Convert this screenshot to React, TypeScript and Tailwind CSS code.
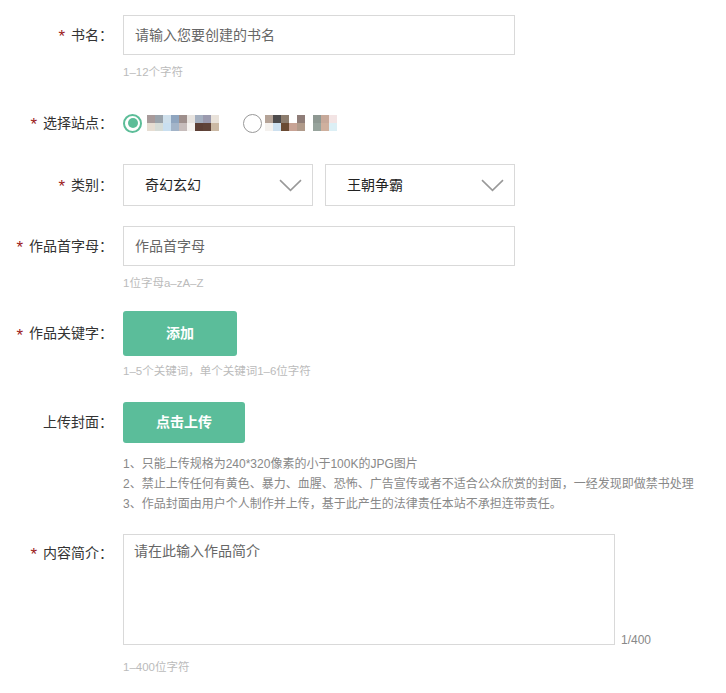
import type { ReactNode } from "react";

const FONT = "font-['Liberation_Sans','Noto_Sans_CJK_SC',sans-serif]";

const mosaicA = [
  ["#a89a9a", "#9aa3ab", "#cfe0ec", "#8fa5bf", "#9e8f8c", "#e8e4e0", "#a5b0c0", "#9b9aae", "#e9e2da"],
  ["#e6ddd2", "#d6dcd7", "#c9dff0", "#a3b4c8", "#c6bcbb", "#f5f2ef", "#5c3f35", "#5f4338", "#cbb9a4"],
];

const mosaicB = [
  ["#b5a397", "#4d4b4c", "#8d7d6e", "#ffffff", "#8f7d78", "#ffffff", "#8e9892", "#c7a99a", "#f3e4e4"],
  ["#f4f1ee", "#cde0ef", "#6b4b33", "#c8a395", "#b09a8a", "#ffffff", "#97a39c", "#cfb09e", "#dceff5"],
];

function Mosaic({ rows }: { rows: string[][] }) {
  return (
    <div className="flex flex-col">
      {rows.map((row, i) => (
        <div key={i} className="flex">
          {row.map((c, j) => (
            <span key={j} className="block h-[8px] w-[8px]" style={{ backgroundColor: c }} />
          ))}
        </div>
      ))}
    </div>
  );
}

function Label({ children, required = true, h }: { children: ReactNode; required?: boolean; h: string }) {
  return (
    <div className={`flex w-[113px] shrink-0 items-center justify-end text-[14px] text-[#333] ${h}`}>
      {required ? <span className="mr-[6px] mt-[3px] text-[17px] leading-none text-[#9b1b1b]">*</span> : null}
      <span>{children}：</span>
    </div>
  );
}

function Hint({ children, className = "" }: { children: ReactNode; className?: string }) {
  return <p className={`text-[11.5px] leading-[20px] text-[#bbb] ${className}`}>{children}</p>;
}

function Chevron() {
  return (
    <svg width="23" height="13" viewBox="0 0 23 13" fill="none" className="text-[#999]">
      <path d="M1 1.2L11.5 11.3L22 1.2" stroke="currentColor" strokeWidth="1.6" />
    </svg>
  );
}

function Select({ value }: { value: string }) {
  return (
    <div className="flex h-[42px] w-[190px] items-center justify-between border border-[#d9d9d9] pl-[21px] pr-[10px] text-[14px] text-[#222]">
      <span>{value}</span>
      <Chevron />
    </div>
  );
}

export default function App() {
  return (
    <div className={`${FONT} min-h-screen bg-white pt-[15px]`}>
      {/* 书名 */}
      <div className="flex gap-[10px]">
        <Label h="h-[40px]">书名</Label>
        <div>
          <div className="flex h-[40px] w-[392px] items-center border border-[#d9d9d9] px-[11px] text-[14px] text-[#666]">
            请输入您要创建的书名
          </div>
          <Hint className="mt-[7px]">1–12个字符</Hint>
        </div>
      </div>

      {/* 选择站点 */}
      <div className="mt-[31px] flex gap-[10px]">
        <Label h="h-[20px]">选择站点</Label>
        <div className="flex h-[20px] items-center">
          <span className="flex h-[19px] w-[19px] items-center justify-center rounded-full border-2 border-[#5cbd98]">
            <span className="h-[10px] w-[10px] rounded-full bg-[#5cbd98]" />
          </span>
          <div className="ml-[5px]">
            <Mosaic rows={mosaicA} />
          </div>
          <span className="ml-[24px] h-[19px] w-[19px] rounded-full border-[1.5px] border-[#999]" />
          <div className="ml-[3px]">
            <Mosaic rows={mosaicB} />
          </div>
        </div>
      </div>

      {/* 类别 */}
      <div className="mt-[31px] flex gap-[10px]">
        <Label h="h-[42px]">类别</Label>
        <div className="flex gap-[12px]">
          <Select value="奇幻玄幻" />
          <Select value="王朝争霸" />
        </div>
      </div>

      {/* 作品首字母 */}
      <div className="mt-[20px] flex gap-[10px]">
        <Label h="h-[40px]">作品首字母</Label>
        <div>
          <div className="flex h-[40px] w-[392px] items-center border border-[#d9d9d9] px-[11px] text-[14px] text-[#666]">
            作品首字母
          </div>
          <Hint className="mt-[7px]">1位字母a–zA–Z</Hint>
        </div>
      </div>

      {/* 作品关键字 */}
      <div className="mt-[18px] flex gap-[10px]">
        <Label h="h-[45px]">作品关键字</Label>
        <div>
          <button
            type="button"
            className="flex h-[45px] w-[114px] items-center justify-center rounded-[3px] bg-[#5bbd9a] text-[14px] font-bold text-white"
          >
            添加
          </button>
          <Hint className="mt-[5px]">1–5个关键词，单个关键词1–6位字符</Hint>
        </div>
      </div>

      {/* 上传封面 */}
      <div className="mt-[21px] flex gap-[10px]">
        <Label h="h-[41px]" required={false}>
          上传封面
        </Label>
        <div>
          <button
            type="button"
            className="flex h-[41px] w-[122px] items-center justify-center rounded-[3px] bg-[#5bbd9a] text-[14px] font-bold text-white"
          >
            点击上传
          </button>
          <div className="mt-[11px] whitespace-nowrap text-[12px] leading-[20px] text-[#888]">
            <p>1、只能上传规格为240*320像素的小于100K的JPG图片</p>
            <p>2、禁止上传任何有黄色、暴力、血腥、恐怖、广告宣传或者不适合公众欣赏的封面，一经发现即做禁书处理</p>
            <p>3、作品封面由用户个人制作并上传，基于此产生的法律责任本站不承担连带责任。</p>
          </div>
        </div>
      </div>

      {/* 内容简介 */}
      <div className="mt-[20px] flex gap-[10px]">
        <Label h="h-[38px]">内容简介</Label>
        <div>
          <div className="flex items-end">
            <div className="h-[111px] w-[492px] border border-[#d9d9d9] px-[10px] py-[6px] text-[14px] text-[#666]">
              请在此输入作品简介
            </div>
            <span className="mb-[-5px] ml-[6px] text-[12px] leading-[20px] text-[#888]">1/400</span>
          </div>
          <Hint className="mt-[12px]">1–400位字符</Hint>
        </div>
      </div>
    </div>
  );
}
